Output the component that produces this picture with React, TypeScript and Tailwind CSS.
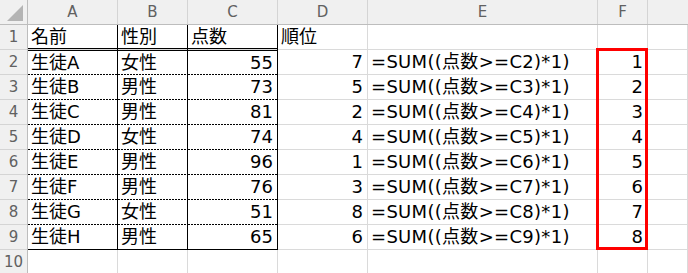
import React from "react";

type Edge = "grid" | "black" | "dash";

const FONT = '"DejaVu Sans", "Noto Sans CJK JP", sans-serif';

const names = ["生徒A", "生徒B", "生徒C", "生徒D", "生徒E", "生徒F", "生徒G", "生徒H"];
const sexes = ["女性", "男性", "男性", "女性", "男性", "男性", "女性", "男性"];
const scores = [55, 73, 81, 74, 96, 76, 51, 65];
const ranks = [7, 5, 2, 4, 1, 3, 8, 6];

function edgeClass(e: Edge) {
  if (e === "black") return "h-px shrink-0 bg-black";
  if (e === "dash")
    return "h-px shrink-0 bg-[linear-gradient(to_right,#000_2px,transparent_2px)] bg-[length:3px_1px] bg-repeat-x";
  return "h-px shrink-0 bg-[#dadada]";
}

function Cell({
  w,
  right = "grid",
  top = false,
  inner = false,
  bottom = "grid",
  align = "left",
  children,
}: {
  w: string;
  right?: "grid" | "black";
  top?: boolean;
  inner?: boolean;
  bottom?: Edge;
  align?: "left" | "right";
  children?: React.ReactNode;
}) {
  return (
    <div
      className={`flex flex-col shrink-0 h-[25px] ${w} ${
        right === "black" ? "border-r border-black" : "border-r border-[#dadada]"
      }`}
    >
      {top && <div className="h-px shrink-0 bg-black" />}
      <div
        className={`flex-1 flex items-center whitespace-nowrap leading-none ${
          align === "right" ? "justify-end pr-[4px]" : "pl-[3px]"
        }`}
      >
        {children}
      </div>
      {inner && <div className="h-px shrink-0 bg-black" />}
      <div className={edgeClass(bottom)} />
    </div>
  );
}

function RowHead({ n }: { n: number }) {
  return (
    <div className="flex flex-col shrink-0 w-[28px] h-[25px] bg-[#f0f0f0] border-r border-[#bdbdbd]">
      <div className="flex-1 flex items-center justify-center text-[15px] text-[#616161] leading-none">
        {n}
      </div>
      <div className="h-px shrink-0 bg-[#d4d4d4]" />
    </div>
  );
}

function ColHead({ w, label, last = false }: { w: string; label: string; last?: boolean }) {
  return (
    <div
      className={`flex items-center justify-center h-full text-[15px] text-[#616161] leading-none ${w} ${
        last ? "" : "border-r border-[#d4d4d4]"
      }`}
    >
      {label}
    </div>
  );
}

export default function App() {
  return (
    <div
      className="relative w-[688px] h-[273px] overflow-hidden bg-white text-[18px] text-black"
      style={{ fontFamily: FONT }}
    >
      {/* column letters */}
      <div className="flex h-[25px] bg-[#f0f0f0] border-b border-[#bdbdbd]">
        <div className="flex items-end justify-end w-[28px] h-full border-r border-[#bdbdbd] pr-[4px] pb-[3px] shrink-0">
          <svg width="16" height="16" viewBox="0 0 16 16">
            <polygon points="16,0 16,16 0,16" fill="#b4b4b4" />
          </svg>
        </div>
        <ColHead w="w-[90px] shrink-0" label="A" />
        <ColHead w="w-[70px] shrink-0" label="B" />
        <ColHead w="w-[90px] shrink-0" label="C" />
        <ColHead w="w-[90px] shrink-0" label="D" />
        <ColHead w="w-[230px] shrink-0" label="E" />
        <ColHead w="w-[50px] shrink-0" label="F" />
        <ColHead w="flex-1" label="" last />
      </div>

      {/* row 1: headings */}
      <div className="flex">
        <RowHead n={1} />
        <Cell w="w-[90px]" right="black" inner>名前</Cell>
        <Cell w="w-[70px]" right="black" inner>性別</Cell>
        <Cell w="w-[90px]" right="black" inner>点数</Cell>
        <Cell w="w-[90px]">順位</Cell>
        <Cell w="w-[230px]" />
        <Cell w="w-[50px]" />
        <Cell w="w-[40px]" />
      </div>

      {/* rows 2-9: data */}
      {names.map((name, i) => {
        const last = i === names.length - 1;
        const edge: Edge = last ? "black" : "dash";
        const top = i === 0;
        return (
          <div className="flex" key={name}>
            <RowHead n={i + 2} />
            <Cell w="w-[90px]" right="black" top={top} bottom={edge}>
              {name}
            </Cell>
            <Cell w="w-[70px]" right="black" top={top} bottom={edge}>
              {sexes[i]}
            </Cell>
            <Cell w="w-[90px]" right="black" top={top} bottom={edge} align="right">
              {scores[i]}
            </Cell>
            <Cell w="w-[90px]" align="right">
              {ranks[i]}
            </Cell>
            <Cell w="w-[230px]">
              <span className="tracking-[0.3px]">{`=SUM((点数>=C${i + 2})*1)`}</span>
            </Cell>
            <Cell w="w-[50px]" align="right">
              {i + 1}
            </Cell>
            <Cell w="w-[40px]" />
          </div>
        );
      })}

      {/* row 10: empty */}
      <div className="flex">
        <RowHead n={10} />
        <Cell w="w-[90px]" />
        <Cell w="w-[70px]" />
        <Cell w="w-[90px]" />
        <Cell w="w-[90px]" />
        <Cell w="w-[230px]" />
        <Cell w="w-[50px]" />
        <Cell w="w-[40px]" />
      </div>

      {/* highlight frame drawn over column F */}
      <div className="absolute left-[596px] top-[48px] w-[52px] h-[202px] border-[3px] border-[#ff0000]" />
    </div>
  );
}
